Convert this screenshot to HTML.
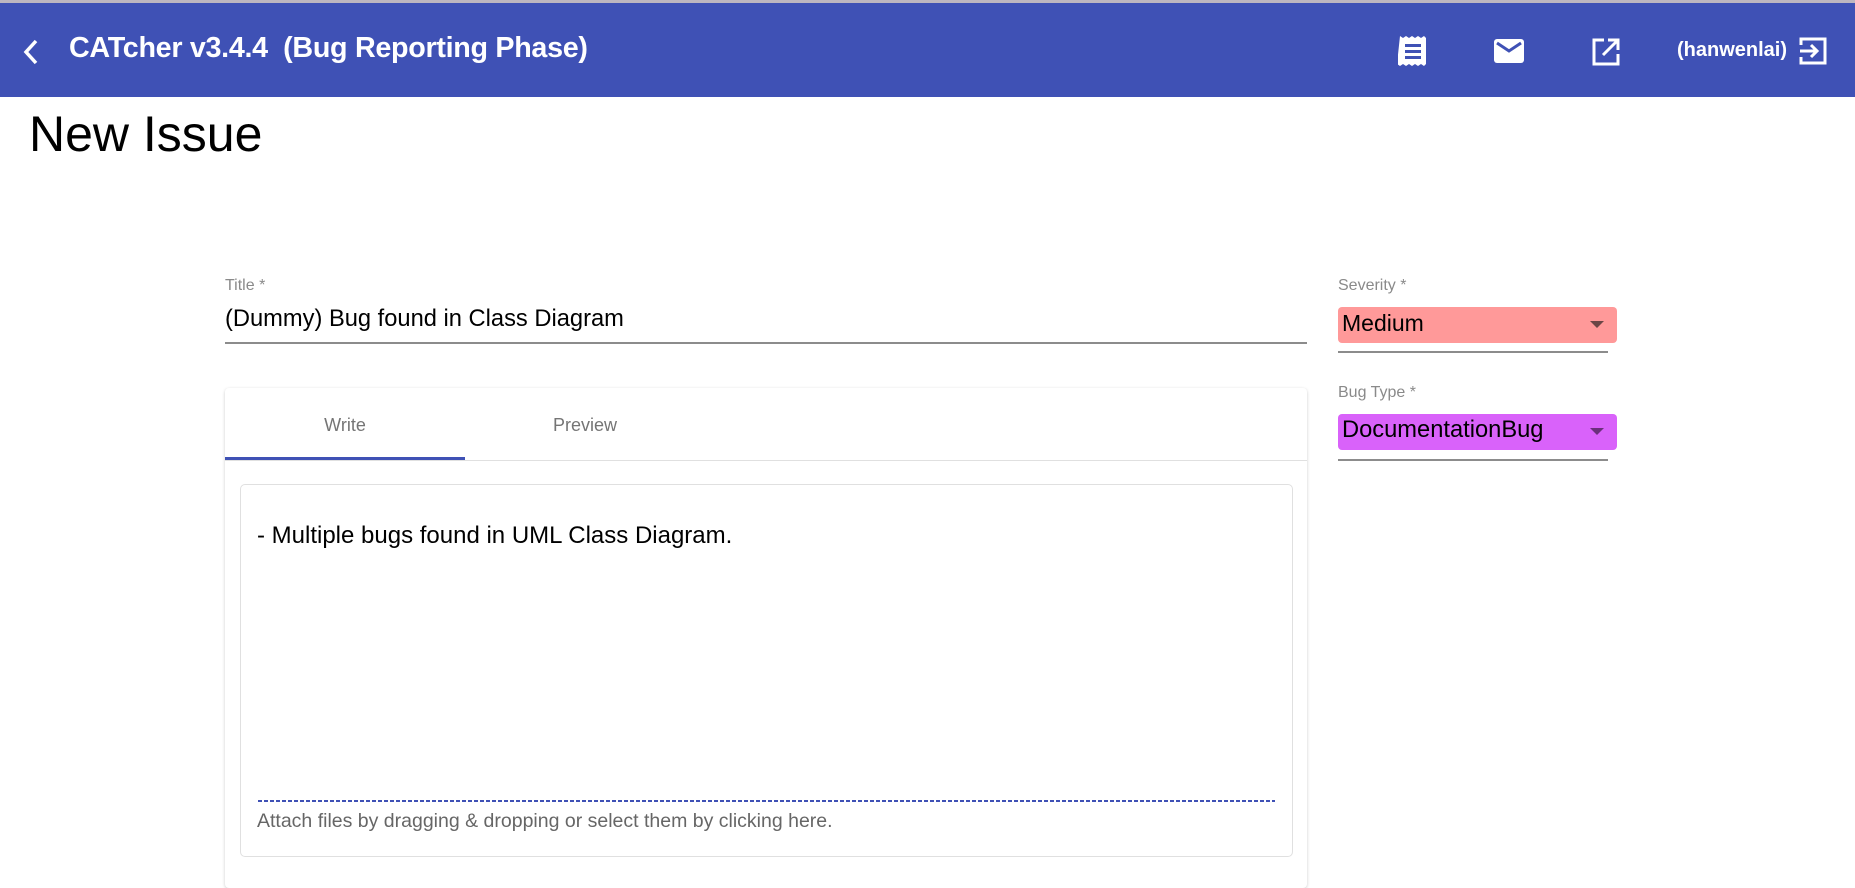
<!DOCTYPE html>
<html><head><meta charset="utf-8"><style>
*{margin:0;padding:0;box-sizing:border-box}
body{width:1855px;height:870px;overflow:hidden;background:#fff;font-family:"Liberation Sans",sans-serif;position:relative}
.a{position:absolute}
.bar{left:0;top:0;width:1855px;height:97px;background:#3f51b5;border-top:3px solid #bdb6c0}
.lbl{color:#8a8a8a;font-size:16px}
</style></head><body>
<div class="a bar"></div>
<svg class="a" style="left:18px;top:36px" width="26" height="32" viewBox="0 0 26 32"><path d="M18 5 L8 16 L18 27" stroke="#fff" stroke-width="3.5" fill="none"/></svg>
<div class="a" style="left:69px;top:32px;color:#fff;font-size:28.7px;font-weight:bold;letter-spacing:-0.3px">CATcher v3.4.4&nbsp; (Bug Reporting Phase)</div>
<svg class="a" style="left:1398px;top:35px" width="30" height="32" viewBox="0 0 30 32"><path d="M2 1 l3 2 l3 -2 l3 2 l3 -2 l3 2 l3 -2 l3 2 l3 -2 l2 2 V29 l-2 2 l-3 -2 l-3 2 l-3 -2 l-3 2 l-3 -2 l-3 2 l-3 -2 l-3 2 l-3 -2z" fill="#fff"/><rect x="7" y="9" width="16" height="3" fill="#3f51b5"/><rect x="7" y="15" width="16" height="3" fill="#3f51b5"/><rect x="7" y="21" width="16" height="3" fill="#3f51b5"/></svg>
<svg class="a" style="left:1493px;top:38px" width="32" height="26" viewBox="0 0 32 26"><rect x="1" y="1" width="30" height="24" rx="3" fill="#fff"/><path d="M4 5 L16 13 L28 5" stroke="#3f51b5" stroke-width="3" fill="none"/></svg>
<svg class="a" style="left:1591px;top:37px" width="30" height="30" viewBox="0 0 30 30"><path d="M13 3 H3 V27 H27 V17" stroke="#fff" stroke-width="3" fill="none"/><path d="M12 18 L26 4 M17 3 H27 V13" stroke="#fff" stroke-width="3" fill="none"/></svg>
<div class="a" style="left:1677px;top:39px;color:#fff;font-size:20px;font-weight:bold">(hanwenlai)</div>
<svg class="a" style="left:1798px;top:36px" width="30" height="30" viewBox="0 0 30 30"><path d="M3 9 V3 H27 V27 H3 V21" stroke="#fff" stroke-width="3" fill="none"/><path d="M2 15 H19 M13 9 L19 15 L13 21" stroke="#fff" stroke-width="3" fill="none"/></svg>
<div class="a" style="left:29px;top:105px;font-size:50px;color:#000">New Issue</div>

<div class="a lbl" style="left:225px;top:277px">Title *</div>
<div class="a" style="left:225px;top:306px;font-size:23.7px;color:#000">(Dummy) Bug found in Class Diagram</div>
<div class="a" style="left:225px;top:342px;width:1082px;height:2px;background:#8c8c8c"></div>

<div class="a lbl" style="left:1338px;top:277px">Severity *</div>
<div class="a" style="left:1338px;top:307px;width:279px;height:36px;background:#ff9999;border-radius:4px"></div>
<div class="a" style="left:1342px;top:310px;font-size:23px;color:#000">Medium</div>
<svg class="a" style="left:1589px;top:320px" width="16" height="10"><path d="M1 1 H15 L8 8z" fill="#6b4646"/></svg>
<div class="a" style="left:1338px;top:351px;width:270px;height:2px;background:#8c8c8c"></div>

<div class="a lbl" style="left:1338px;top:384px">Bug Type *</div>
<div class="a" style="left:1338px;top:414px;width:279px;height:36px;background:#d962fa;border-radius:4px"></div>
<div class="a" style="left:1342px;top:417px;font-size:23.7px;color:#000">DocumentationBug</div>
<svg class="a" style="left:1589px;top:427px" width="16" height="10"><path d="M1 1 H15 L8 8z" fill="#6b2f7c"/></svg>
<div class="a" style="left:1338px;top:459px;width:270px;height:2px;background:#8c8c8c"></div>

<div class="a" style="left:225px;top:388px;width:1082px;height:500px;background:#fff;box-shadow:0 1px 3px rgba(0,0,0,.2);border-radius:4px"></div>
<div class="a" style="left:225px;top:460px;width:1082px;height:1px;background:#e0e0e0"></div>
<div class="a" style="left:225px;top:457px;width:240px;height:3px;background:#3f51b5"></div>
<div class="a" style="left:225px;top:415px;width:240px;text-align:center;font-size:18px;color:#757575">Write</div>
<div class="a" style="left:465px;top:415px;width:240px;text-align:center;font-size:18px;color:#757575">Preview</div>
<div class="a" style="left:240px;top:484px;width:1053px;height:373px;border:1px solid #e0e0e0;border-radius:5px"></div>
<div class="a" style="left:257px;top:522px;font-size:24px;color:#000">- Multiple bugs found in UML Class Diagram.</div>
<div class="a" style="left:258px;top:800px;width:1017px;height:2px;background:repeating-linear-gradient(90deg,#3f51b5 0 4px,transparent 4px 6px)"></div>
<div class="a" style="left:257px;top:810px;font-size:19.5px;color:#666">Attach files by dragging &amp; dropping or select them by clicking here.</div>
</body></html>
